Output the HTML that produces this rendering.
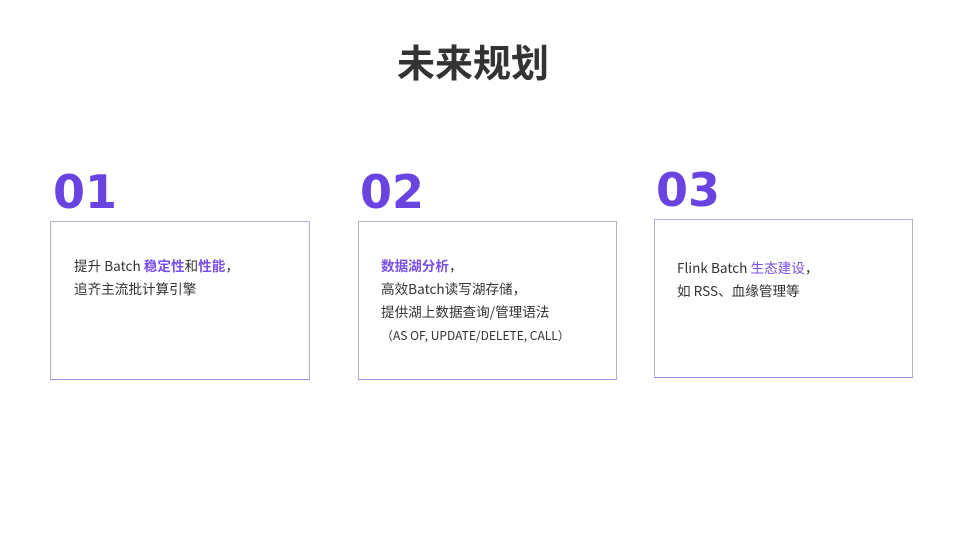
<!DOCTYPE html>
<html><head><meta charset="utf-8"><style>
body{margin:0;width:960px;height:540px;background:#fff;position:relative;overflow:hidden;font-family:"Noto Sans CJK SC",sans-serif;color:#333}
.t{position:absolute;left:0;width:946px;text-align:center;top:33px;font-size:38px;font-weight:bold;color:#333;font-family:"Noto Sans CJK SC",sans-serif}
.n{position:absolute;font-size:46px;font-weight:900;color:#6a44e0;font-family:"DejaVu Sans","Liberation Sans",sans-serif;line-height:1}
.b{position:absolute;width:257px;height:159px;border:1px solid #b4b0cc;border-bottom-color:#9a88d8;box-sizing:border-box}
.x{position:absolute;font-size:13.6px;line-height:23px;color:#333;font-family:"Noto Sans CJK SC",sans-serif}
.p{color:#7a4fe6;font-weight:bold}
.s{font-size:12px}
</style></head><body>
<div class="t">未来规划</div>
<div class="n" style="left:53px;top:169px">01</div>
<div class="n" style="left:360px;top:169px">02</div>
<div class="n" style="left:656px;top:167px">03</div>
<div class="b" style="left:50px;top:221px;width:260px"></div>
<div class="b" style="left:358px;top:221px;width:259px"></div>
<div class="b" style="left:654px;top:219px;width:259px"></div>
<div class="x" style="left:74px;top:254px">提升 Batch <span class="p">稳定性</span>和<span class="p">性能</span>，<br>追齐主流批计算引擎</div>
<div class="x" style="left:381px;top:254px"><span class="p">数据湖分析</span>，<br>高效Batch读写湖存储，<br>提供湖上数据查询/管理语法<br><span class="s">（AS OF, UPDATE/DELETE, CALL）</span></div>
<div class="x" style="left:677px;top:256px">Flink Batch <span class="p" style="font-weight:normal">生态建设</span>，<br>如 RSS、血缘管理等</div>
</body></html>
